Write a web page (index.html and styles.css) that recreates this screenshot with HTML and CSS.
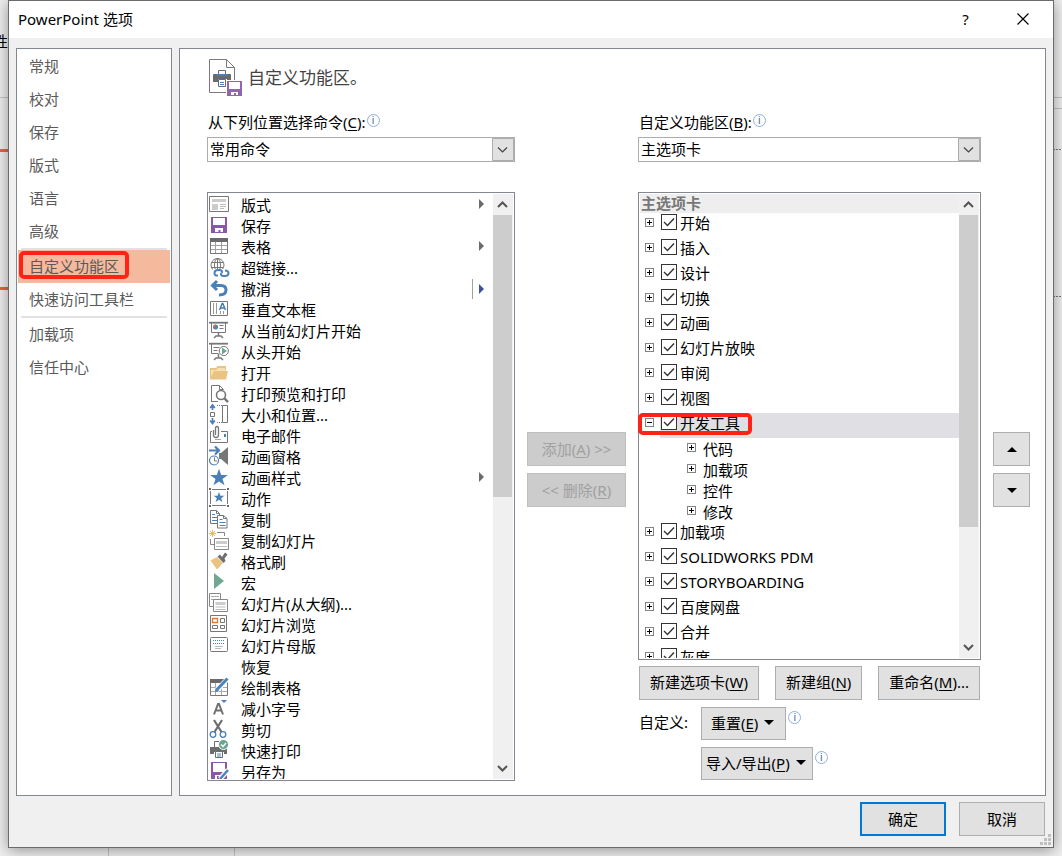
FILE: index.html
```html
<!DOCTYPE html>
<html lang="zh-CN">
<head>
    <meta charset="UTF-8">
    <title>PowerPoint 选项</title>
    <link rel="stylesheet" href="styles.css">
</head>
<body>
    <!-- Application behind the dialog -->
    <div class="backdrop">
        <span class="backdrop-text">性</span>
        <span class="line line-ribbon"></span>
        <span class="line line-right"></span>
        <span class="line line-orange-1"></span>
        <span class="line line-orange-2"></span>
        <span class="line line-dash-1"></span>
        <span class="line line-dash-2"></span>
        <span class="line line-status-1"></span>
        <span class="line line-status-2"></span>
    </div>

    <div class="dialog" role="dialog" aria-labelledby="dialog-title">
        <header class="title-bar">
            <h1 id="dialog-title">PowerPoint 选项</h1>
            <button class="title-button" aria-label="帮助">?</button>
            <button class="title-button" aria-label="关闭">
                <svg width="12" height="12" viewBox="0 0 12 12" fill="none" stroke="#000" stroke-width="1.2"><path d="M.5.5l11 11M11.5.5l-11 11"/></svg>
            </button>
        </header>

        <div class="dialog-body">
            <!-- Categories -->
            <nav class="nav">
                <a href="#general">常规</a>
                <a href="#proofing">校对</a>
                <a href="#save">保存</a>
                <a href="#layout">版式</a>
                <a href="#language">语言</a>
                <a href="#advanced">高级</a>
                <hr>
                <a href="#ribbon" class="active">自定义功能区<span class="mark"></span></a>
                <a href="#toolbar">快速访问工具栏</a>
                <hr>
                <a href="#addins">加载项</a>
                <a href="#trust">信任中心</a>
            </nav>

            <main class="panel">
                <div class="panel-header">
                    <svg width="34" height="38" viewBox="0 0 34 38">
                        <path d="M.5.5h17l8 8v25h-25z" fill="#fff" stroke="#7a7a7a"/>
                        <path d="M17.500.5v8h8" fill="none" stroke="#7a7a7a"/>
                        <path d="M5 15h16q1 0 1 1v7h-4v-3h-9v3H4v-7q0-1 1-1z" fill="#6a6a6a"/>
                        <path d="M9.500 16v-4.500h7V16" fill="#fff" stroke="#6a6a6a"/>
                        <path d="M8 16h10" stroke="#4a7ebb" stroke-width="2"/>
                        <path d="M9.500 20.500h7v7h-7z" fill="#fff" stroke="#6a6a6a"/>
                        <path d="M11 23.500h4M11 25.500h4" stroke="#4a7ebb"/>
                        <path d="M17 21h17v17H17z" fill="#fff"/>
                        <path d="M18 22h15v15H18z" fill="#9264b4"/>
                        <path d="M20 23h11v7H20zM22 33h7v3h-2v-2h-2v2h-3z" fill="#fff"/>
                    </svg>
                    <h2>自定义功能区。</h2>
                </div>

                <div class="columns">
                    <!-- Available commands -->
                    <section class="column">
                        <div class="field-label">
                            <label for="source">从下列位置选择命令(<u>C</u>):</label>
                            <span class="info">i</span>
                        </div>
                        <select id="source"><option>常用命令</option></select>

                        <div class="listbox">
                            <ul class="commands">
                                <li><svg class="icon" viewBox="0 0 20 20"><path d="M.5 1.500h19v15H.5z" fill="#fff" stroke="#777"/><path d="M3 4h14v3H3zM3 9h6v6H3z" fill="#ccc"/><path d="M11 9.500h6M11 11.500h6M11 13.500h4" stroke="#bbb"/></svg>版式<i class="more"></i></li>
                                <li><svg class="icon" viewBox="0 0 20 20"><path d="M2 1h16v16H2z" fill="#8a57a9"/><path d="M4 2h12v7H4zM6 12h8v4h-2.500v-2h-2v2H6z" fill="#fff"/></svg>保存</li>
                                <li><svg class="icon" viewBox="0 0 20 20"><path d="M1.500 1.500h17v15h-17z" fill="#fff" stroke="#777"/><path d="M1 1h18v4H1z" fill="#6a6a6a"/><path d="M2 8.500h16M2 12.500h16M6.500 5v11M12.500 5v11" stroke="#a0a0a0"/></svg>表格<i class="more"></i></li>
                                <li><svg class="icon" viewBox="0 0 20 20" fill="none"><circle cx="8.500" cy="7" r="6.500" stroke="#777"/><ellipse cx="8.500" cy="7" rx="3" ry="6.500" stroke="#777"/><path d="M2.500 4.500h12M2 9.500h12M8.500.5v13" stroke="#777"/><path d="M4 11h16v9H4z" fill="#fff"/><path d="M9 17.500q-3.500.5-3.500-2.500t3.500-3h1.500q3 0 2.500 3M16 12.500q3.500 0 3.500 2.800 0 2.700-3.500 2.700h-1.500q-3 0-2.500-3" stroke="#4a84c0" stroke-width="2"/></svg>超链接...</li>
                                <li><svg class="icon" viewBox="0 0 20 20" fill="none" stroke="#4a7fb8" stroke-width="3"><path d="M8 2L3.500 6.500 8 11M4 6.500h8q5 0 5 4.500 0 5-7 5"/></svg>撤消<i class="split"></i></li>
                                <li><svg class="icon" viewBox="0 0 20 20" fill="none"><path d="M1.500 1.500h17v14h-17z" fill="#fff" stroke="#777"/><path d="M4.500 3v11M7.500 3v11M11.500 11v3M14.500 11v3" stroke="#999"/><path d="M10.500 10l2.700-6.500h.6L16.500 10M11.500 8h4" stroke="#3f78b8" stroke-width="1.400"/></svg>垂直文本框</li>
                                <li><svg class="icon" viewBox="0 0 20 20" fill="none" stroke="#777"><path d="M0 1.700h19" stroke-width="1.800"/><path d="M2.500 2v9.500h14V2"/><path d="M9.500 12v3M5 17l2-2h5l2 2" stroke-width="1.500"/><circle cx="6.500" cy="6" r="2.500" fill="#4a7fb8" stroke="none"/><path d="M6.500 3.500a2.500 2.500 0 0 0-2.400 3.100l2.400-.6z" fill="#e0703a" stroke="none"/><path d="M10.500 4.500h4M10.500 7.500h4"/></svg>从当前幻灯片开始</li>
                                <li><svg class="icon" viewBox="0 0 20 20" fill="none" stroke="#777"><path d="M0 1.700h19" stroke-width="1.800"/><path d="M2.500 2v9.500h7"/><path d="M4.500 5.500h6M4.500 8.500h4"/><path d="M9.500 12v4M5 18l2-2h5l2 2" stroke-width="1.500"/><circle cx="14.800" cy="9" r="4.600" fill="#fff"/><path d="M13 5.500l5 3.500-5 3.500z" fill="#6aa58e" stroke="none"/></svg>从头开始</li>
                                <li><svg class="icon" viewBox="0 0 20 20"><path d="M1 16V5h6l2-2h8v5" fill="#f6dfb4"/><path d="M1 16V5h6l2-2h8v4h-1V5H9L7 7H2v7z" fill="#eac282"/><path d="M1 16.500L5 8h14l-2 8.500z" fill="#eac282"/></svg>打开</li>
                                <li><svg class="icon" viewBox="0 0 20 20" fill="none" stroke="#777"><path d="M2.500 18V1.500h8l4 4M10.500 1.500v4h4M2 17.500h7"/><circle cx="12" cy="11" r="4.500" fill="#fff" stroke-width="1.600"/><path d="M15.200 14.200l3.800 4" stroke-width="2.400"/></svg>打印预览和打印</li>
                                <li><svg class="icon" viewBox="0 0 20 20" fill="none"><path d="M3.500 0v5M3.500 13v5M1.200 3l2.300-3 2.300 3M1.200 15.500l2.300 3 2.300-3" stroke="#4a7fb8" stroke-width="1.700"/><path d="M1.500 7.500h4v4h-4z" stroke="#777"/><path d="M8 .5h6M8 17.500h6" stroke="#777" stroke-dasharray="1 1"/><path d="M13.500.5h5v17h-5z" stroke="#777"/></svg>大小和位置...</li>
                                <li><svg class="icon" viewBox="0 0 20 20" fill="none" stroke="#777"><path d="M3 5.500H1.500v11h17v-11H12"/><path d="M4.500 4v5q0 2.500 2.500 2.500T9.500 9V2.500Q9.500.5 8 .5T6.500 2.500V9" stroke-width="1.300"/><path d="M6 13.500h6" stroke="#aaa"/><path d="M15 8h2v3h-2z" fill="#4a7fb8" stroke="none"/></svg>电子邮件</li>
                                <li><svg class="icon" viewBox="0 0 20 20" fill="none"><path d="M0 3.500h9M6-.5l4 4-4 4" stroke="#4a7fb8" stroke-width="2.200"/><path d="M19 0v18l-7-6h-2V6h2z" fill="#777"/><circle cx="5" cy="13.500" r="5.500" fill="#fff"/><circle cx="5" cy="13.500" r="4.500" stroke="#4a7fb8" stroke-width="1.200"/><path d="M5.500 10.500v3.500h2.500" stroke="#777"/></svg>动画窗格</li>
                                <li><svg class="icon" viewBox="0 0 20 20"><path d="M10 .8l2.200 6.100h6.600l-5.300 4 2 6.400L10 13.500l-5.500 3.800 2-6.400-5.300-4h6.600z" fill="#4a7fb8"/></svg>动画样式<i class="more"></i></li>
                                <li><svg class="icon" viewBox="0 0 20 20"><path d="M3 .5h14M3 16.500h14M1.500 2v13M18.500 2v13" fill="none" stroke="#777"/><path d="M0-1h2v2H0zM18-1h2v2h-2zM0 16h2v2H0zM18 16h2v2h-2z" fill="#666"/><path d="M10 3l1.400 3.700h3.900l-3.100 2.500 1.200 3.900-3.400-2.300-3.400 2.300 1.200-3.900-3.100-2.500h3.900z" fill="#4a7fb8"/></svg>动作</li>
                                <li><svg class="icon" viewBox="0 0 20 20" stroke="#777" fill="#fff"><path d="M1.500.5h6l3 3v10h-9z"/><path d="M7.500.5v3h3" fill="none"/><path d="M3 4.500h3M3 7.500h5M3 10.500h5" stroke="#4a7fb8"/><path d="M8.500 5.500h6l3.500 3v9.500H8.500z"/><path d="M14.500 5.500v3h3.500" fill="none"/><path d="M10.500 9.500h3M10.500 12.500h6M10.500 15.500h6" stroke="#4a7fb8"/></svg>复制</li>
                                <li><svg class="icon" viewBox="0 0 20 20" fill="none" stroke="#888"><path d="M3.500-1v7M0 2.500h7M1 0l5 5M6 0L1 5" stroke="#eab860"/><path d="M8 1.500h7.500V5M1.500 8v5.500H5"/><path d="M5.500 7.500h14v11h-14z" fill="#fff"/><path d="M7 10h11v3H7z" fill="#ccc" stroke="none"/><path d="M7 15.500h11" stroke="#bbb"/></svg>复制幻灯片</li>
                                <li><svg class="icon" viewBox="0 0 20 20"><path d="M1.500 8.500L8 5l6 6-6 6.500z" fill="#eac282"/><path d="M8.500 4.500l2.500-2 2 2.500 3-4.500 2.500 2-3 4 1 2.500-2 2z" fill="#6d6d6d"/></svg>格式刷</li>
                                <li><svg class="icon" viewBox="0 0 20 20"><path d="M5 0l10 8-10 8z" fill="#6fa792"/></svg>宏</li>
                                <li><svg class="icon" viewBox="0 0 20 20" fill="none" stroke="#888"><path d="M4 12.500H.5v-13h11V5"/><path d="M2 2.500h8M2 5.500h3" stroke="#aaa"/><path d="M4.500 5.500h14v12h-14z" fill="#fff"/><path d="M6.500 8h10v3h-10z" fill="#ccc" stroke="none"/><path d="M6.500 13h10M6.500 15.500h10" stroke="#bbb"/></svg>幻灯片(从大纲)...</li>
                                <li><svg class="icon" viewBox="0 0 20 20" fill="none" stroke="#777"><path d="M1.500.5h16v16h-16z"/><path d="M3.500 3.500h5v4h-5z" stroke="#e07b30" stroke-width="1.300"/><path d="M11.500 3.500h4v4h-4zM3.500 10.500h5v3h-5zM11.500 10.500h4v3h-4z"/></svg>幻灯片浏览</li>
                                <li><svg class="icon" viewBox="0 0 20 20" fill="none" stroke="#777"><rect x="1.500" y="1.500" width="17" height="14" rx="1"/><path d="M4 4.500h12M4 7.500h12" stroke="#4a7fb8" stroke-dasharray="1 1"/><path d="M6 10.500h8M6 12.500h6" stroke="#bbb"/></svg>幻灯片母版</li>
                                <li><span class="icon"></span>恢复</li>
                                <li><svg class="icon" viewBox="0 0 20 20" fill="none"><path d="M1.500 1.500h17v16h-17z" fill="#fff" stroke="#777"/><path d="M1 1h14v4H1z" fill="#6a6a6a"/><path d="M2 9.500h16M2 13.500h16M6.500 5v12M12.500 5v12" stroke="#aaa"/><path d="M8 12l10.500-11" stroke="#fff" stroke-width="5"/><path d="M8 11.500L18.500.5" stroke="#4a84c0" stroke-width="3"/><path d="M6 14l1-4 3 3z" fill="#4a84c0"/></svg>绘制表格</li>
                                <li><svg class="icon" viewBox="0 0 20 20" fill="none"><path d="M5 15.500L9 5h1l4 10.500M6.500 11.500h6" stroke="#707070" stroke-width="2"/><path d="M12 1h6l-3 3z" fill="#4a7fb8"/></svg>减小字号</li>
                                <li><svg class="icon" viewBox="0 0 20 20" fill="none"><path d="M5 0l7.500 12M13 0L5.500 12" stroke="#6d6d6d" stroke-width="2.200"/><circle cx="4" cy="14.500" r="2.800" stroke="#4a7fb8" stroke-width="1.300"/><circle cx="14" cy="14.500" r="2.800" stroke="#4a7fb8" stroke-width="1.300"/></svg>剪切</li>
                                <li><svg class="icon" viewBox="0 0 20 20" fill="none"><path d="M1 6h17v7h-3v-2H5v2H1z" fill="#6d6d6d"/><path d="M5.500 6V.5h6" stroke="#6d6d6d"/><path d="M6.500 10.500h7v6h-7z" fill="#fff" stroke="#6d6d6d"/><path d="M8 13h4M8 15h4" stroke="#4a7fb8"/><circle cx="14.500" cy="3.500" r="5" fill="#6aa58e" stroke="#fff"/><path d="M12 3.500l2 2 3-3.500" stroke="#fff" stroke-width="1.400"/></svg>快速打印</li>
                                <li><svg class="icon" viewBox="0 0 20 20" fill="none"><path d="M2 0h16v17H2z" fill="#8a57a9"/><path d="M4 1h12v9H4zM6 13h8v4H6z" fill="#fff"/><path d="M8 14h2v3H8z" fill="#8a57a9"/><path d="M11 17l8-9" stroke="#fff" stroke-width="5"/><path d="M11 17l8-9" stroke="#4a84c0" stroke-width="2.500"/></svg>另存为</li>
                            </ul>
                            <div class="scrollbar">
                                <button class="scroll-button" aria-label="向上"><svg width="11" height="7" viewBox="0 0 11 7"><path d="M1 6l4.500-4.500L10 6"/></svg></button>
                                <div class="track"><div class="thumb thumb-commands"></div></div>
                                <button class="scroll-button" aria-label="向下"><svg width="11" height="7" viewBox="0 0 11 7"><path d="M1 1l4.500 4.500L10 1"/></svg></button>
                            </div>
                        </div>
                    </section>

                    <div class="side-buttons">
                        <button class="button" disabled>添加(<u>A</u>) &gt;&gt;</button>
                        <button class="button" disabled>&lt;&lt; 删除(<u>R</u>)</button>
                    </div>

                    <!-- Ribbon tabs -->
                    <section class="column">
                        <div class="field-label">
                            <label for="target">自定义功能区(<u>B</u>):</label>
                            <span class="info">i</span>
                        </div>
                        <select id="target"><option>主选项卡</option></select>

                        <div class="listbox">
                            <div class="tree">
                                <div class="tree-header">主选项卡</div>
                                <ul>
                                    <li class="tab"><button class="expander" aria-label="展开"></button><label><input type="checkbox" checked>开始</label></li>
                                    <li class="tab"><button class="expander" aria-label="展开"></button><label><input type="checkbox" checked>插入</label></li>
                                    <li class="tab"><button class="expander" aria-label="展开"></button><label><input type="checkbox" checked>设计</label></li>
                                    <li class="tab"><button class="expander" aria-label="展开"></button><label><input type="checkbox" checked>切换</label></li>
                                    <li class="tab"><button class="expander" aria-label="展开"></button><label><input type="checkbox" checked>动画</label></li>
                                    <li class="tab"><button class="expander" aria-label="展开"></button><label><input type="checkbox" checked>幻灯片放映</label></li>
                                    <li class="tab"><button class="expander" aria-label="展开"></button><label><input type="checkbox" checked>审阅</label></li>
                                    <li class="tab"><button class="expander" aria-label="展开"></button><label><input type="checkbox" checked>视图</label></li>
                                    <li class="tab selected"><button class="expander open" aria-label="折叠"></button><label><input type="checkbox" checked>开发工具</label><span class="mark"></span></li>
                                    <li class="group"><button class="expander" aria-label="展开"></button>代码</li>
                                    <li class="group"><button class="expander" aria-label="展开"></button>加载项</li>
                                    <li class="group"><button class="expander" aria-label="展开"></button>控件</li>
                                    <li class="group"><button class="expander" aria-label="展开"></button>修改</li>
                                    <li class="tab"><button class="expander" aria-label="展开"></button><label><input type="checkbox" checked>加载项</label></li>
                                    <li class="tab"><button class="expander" aria-label="展开"></button><label><input type="checkbox" checked>SOLIDWORKS PDM</label></li>
                                    <li class="tab"><button class="expander" aria-label="展开"></button><label><input type="checkbox" checked>STORYBOARDING</label></li>
                                    <li class="tab"><button class="expander" aria-label="展开"></button><label><input type="checkbox" checked>百度网盘</label></li>
                                    <li class="tab"><button class="expander" aria-label="展开"></button><label><input type="checkbox" checked>合并</label></li>
                                    <li class="tab"><button class="expander" aria-label="展开"></button><label><input type="checkbox" checked>灰度</label></li>
                                </ul>
                            </div>
                            <div class="scrollbar">
                                <button class="scroll-button" aria-label="向上"><svg width="11" height="7" viewBox="0 0 11 7"><path d="M1 6l4.500-4.500L10 6"/></svg></button>
                                <div class="track"><div class="thumb thumb-tabs"></div></div>
                                <button class="scroll-button" aria-label="向下"><svg width="11" height="7" viewBox="0 0 11 7"><path d="M1 1l4.500 4.500L10 1"/></svg></button>
                            </div>
                        </div>

                        <div class="tab-actions">
                            <button class="button">新建选项卡(<u>W</u>)</button>
                            <button class="button">新建组(<u>N</u>)</button>
                            <button class="button">重命名(<u>M</u>)...</button>
                        </div>
                        <div class="customize">
                            <span>自定义:</span>
                            <div class="menu-row"><button class="button menu">重置(<u>E</u>)</button><span class="info">i</span></div>
                            <div class="menu-row"><button class="button menu menu-wide">导入/导出(<u>P</u>)</button><span class="info">i</span></div>
                        </div>
                    </section>

                    <div class="side-buttons">
                        <button class="button" aria-label="上移"><i class="arrow-up"></i></button>
                        <button class="button" aria-label="下移"><i class="arrow-down"></i></button>
                    </div>
                </div>
            </main>
        </div>

        <footer class="dialog-footer">
            <button class="button primary">确定</button>
            <button class="button">取消</button>
        </footer>
        <svg class="grip" width="12" height="12" viewBox="0 0 12 12" fill="#bfbfbf"><path d="M8 0h3v3H8zM4 4h3v3H4zM8 4h3v3H8zM0 8h3v3H0zM4 8h3v3H4zM8 8h3v3H8z"/></svg>
    </div>
</body>
</html>
```
FILE: styles.css
```css
* {
    box-sizing: border-box;
}

body {
    margin: 0;
    padding: 0 8px 8px;
    background: #efefef;
    color: #000;
    font: 15px/20px "Noto Sans", "Noto Sans CJK SC", sans-serif;
    overflow: hidden;
}

h1, h2, ul {
    margin: 0;
    padding: 0;
    font-weight: normal;
}

ul {
    list-style: none;
}

button, select, input {
    margin: 0;
    padding: 0;
    font: inherit;
    color: inherit;
}

u {
    text-underline-offset: 2px;
}

/* Backdrop */
.backdrop {
    position: absolute;
    inset: 0;
    overflow: hidden;
}

.backdrop-text {
    position: absolute;
    left: -7px;
    top: 31px;
}

.line {
    position: absolute;
    height: 1px;
    background: #c4c4c4;
}

.line-ribbon { left: 0; right: 0; top: 97px; }
.line-right { left: 50%; right: 0; top: 108px; }

.line-orange-1, .line-orange-2 {
    left: 0;
    width: 9px;
    height: 3px;
    background: #e0694a;
}

.line-orange-1 { top: 149px; }
.line-orange-2 { top: 287px; }

.line-dash-1, .line-dash-2 {
    left: 50%;
    right: 0;
    background: repeating-linear-gradient(90deg, #777 0 2px, transparent 2px 3px);
}

.line-dash-1 { top: 149px; }
.line-dash-2 { top: 296px; }

.line-status-1, .line-status-2 {
    bottom: 0;
    width: 1px;
    height: 10px;
}

.line-status-1 { left: 108px; }
.line-status-2 { left: 234px; }

/* Dialog */
.dialog {
    position: relative;
    display: flex;
    flex-direction: column;
    height: calc(100vh - 8px);
    border: 1px solid #6b6b6b;
    background: #f0f0f0;
    box-shadow: 0 2px 14px rgba(0, 0, 0, 0.4);
}

.title-bar {
    display: flex;
    align-items: center;
    height: 37px;
    padding: 0 2px 2px 9px;
    background: #fff;
}

.title-bar h1 {
    flex: 1;
    font-size: 15px;
}

.title-button {
    width: 57px;
    height: 34px;
    border: none;
    background: none;
}

.dialog-body {
    display: flex;
    flex: 1;
    gap: 7px;
    min-height: 0;
    padding: 10px 7px 0;
}

/* Categories */
.nav {
    width: 156px;
    padding: 1px;
    border: 1px solid #828790;
    background: #fff;
}

.nav a {
    position: relative;
    display: block;
    padding-left: 11px;
    line-height: 33px;
    color: #5a5a5a;
    text-decoration: none;
}

.nav a.active {
    background: #f5b99d;
}

.nav hr {
    height: 2px;
    margin: 0 3px;
    border: none;
    background: #e2e2e2;
}

.mark {
    position: absolute;
    border: 4px solid #ff2216;
    border-radius: 5px;
}

.nav .mark {
    left: 1px;
    top: 1px;
    width: 110px;
    height: 28px;
}

/* Panel */
.panel {
    display: flex;
    flex: 1;
    flex-direction: column;
    min-width: 0;
    padding: 10px 15px 14px 27px;
    border: 1px solid #828790;
    background: #fff;
}

.panel-header {
    display: flex;
    align-items: center;
    gap: 5px;
    padding-left: 2px;
    margin-bottom: 15px;
    color: #444;
}

.panel-header h2 {
    font-size: 17px;
}

.columns {
    display: grid;
    grid-template-columns: minmax(0, 308fr) 99px minmax(0, 343fr) 37px;
    grid-template-rows: minmax(0, 1fr);
    gap: 12px;
    flex: 1;
    min-height: 0;
}

.column {
    display: flex;
    flex-direction: column;
    min-height: 0;
}

.field-label {
    display: flex;
    gap: 1px;
    padding-left: 1px;
    margin-bottom: 5px;
}

.info {
    width: 13px;
    height: 13px;
    margin-top: 2px;
    border: 1px solid #8fb0dc;
    border-radius: 50%;
    color: #44618f;
    font-size: 10px;
    line-height: 11px;
    text-align: center;
}

select {
    height: 25px;
    padding: 0 0 2px 2px;
    border: 1px solid #acacac;
    border-radius: 0;
    appearance: none;
    background:
        url("data:image/svg+xml,%3Csvg xmlns='http://www.w3.org/2000/svg' width='22' height='23'%3E%3Cpath d='M.5.5h21v22H.5z' fill='%23e1e1e1' stroke='%23acacac'/%3E%3Cpath d='M6 9.500l4.500 4.500L15 9.500' fill='none' stroke='%23444' stroke-width='1.200'/%3E%3C/svg%3E") right center no-repeat #fff;
}

.listbox {
    display: flex;
    flex: 1;
    min-height: 0;
    margin-top: 30px;
    padding: 1px;
    border: 1px solid #828790;
}

.commands, .tree {
    flex: 1;
    min-width: 0;
    overflow: hidden;
}

.commands {
    padding-top: 1px;
}

.commands li {
    display: flex;
    height: 21px;
    padding-right: 9px;
}

.icon {
    flex: none;
    width: 20px;
    height: 20px;
    margin-right: 12px;
    overflow: visible;
}

.more {
    height: 10px;
    margin: 4px 0 0 auto;
    border: 5px solid transparent;
    border-right: none;
    border-left-color: #6b6b6b;
}

.split {
    height: 20px;
    margin-left: auto;
    padding: 5px 0 5px 6px;
    border-left: 1px solid #a0a0a0;
}

.split::before {
    content: "";
    display: block;
    border: 5px solid transparent;
    border-right: none;
    border-left-color: #3c539c;
}

/* Scrollbar */
.scrollbar {
    display: flex;
    flex-direction: column;
    width: 20px;
    background: #f0f0f0;
}

.scroll-button {
    height: 21px;
    padding-right: 2px;
    border: none;
    background: none;
    line-height: 0;
}

.scroll-button path {
    fill: none;
    stroke: #555;
    stroke-width: 2;
}

.track {
    flex: 1;
}

.thumb {
    width: 19px;
    background: #cdcdcd;
}

.thumb-commands { height: 52%; }
.thumb-tabs { height: 74%; }

/* Tree */
.tree {
    margin-left: -2px;
    padding-left: 2px;
}

.tree-header {
    height: 19px;
    padding-left: 1px;
    background: #eee;
    color: #777;
    font-weight: bold;
    line-height: 19px;
}

.tab, .group {
    display: flex;
    align-items: flex-start;
    line-height: 21px;
}

.tab {
    position: relative;
    height: 25px;
    padding-left: 5px;
}

.group {
    height: 21px;
    padding-left: 47px;
    line-height: 23px;
}

.group .expander {
    margin-right: 7px;
}

.tab label {
    display: flex;
    flex: 1;
    gap: 3px;
    padding-left: 1px;
}

.selected label {
    background: #e0dfe4;
    height: 25px;
}

.expander {
    flex: none;
    width: 9px;
    height: 9px;
    margin: 5px 6px 0 0;
    border: 1px solid #848484;
    background:
        linear-gradient(#000, #000) center / 5px 1px no-repeat,
        linear-gradient(#000, #000) center / 1px 5px no-repeat,
        #fff;
}

.expander.open {
    background: linear-gradient(#000, #000) center / 5px 1px no-repeat, #fff;
}

input[type="checkbox"] {
    width: 16px;
    height: 16px;
    margin-top: 1px;
    border: 1px solid #333;
    appearance: none;
    background: #fff;
}

input[type="checkbox"]:checked {
    background: url("data:image/svg+xml,%3Csvg xmlns='http://www.w3.org/2000/svg' width='14' height='14'%3E%3Cpath d='M2 7l3.500 3.500L12 3.500' fill='none' stroke='%23333' stroke-width='1.400'/%3E%3C/svg%3E") #fff;
}

.tab .mark {
    left: -2px;
    top: 0;
    width: 114px;
    height: 22px;
}

/* Buttons */
.button {
    height: 34px;
    padding: 0 10px 2px;
    border: 1px solid #adadad;
    background: #e1e1e1;
    white-space: nowrap;
}

.button:disabled {
    padding: 0;
    border-color: #bfbfbf;
    background: #ccc;
    color: #a0a0a0;
}

.side-buttons {
    display: flex;
    flex-direction: column;
    gap: 7px;
    padding-top: 320px;
}

.side-buttons .button {
    flex: none;
}

.tab-actions {
    display: flex;
    justify-content: space-between;
    padding: 6px 1px 7px;
}

.customize {
    display: grid;
    grid-template-columns: 62px 1fr;
    row-gap: 7px;
    padding: 0 0 1px 1px;
}

.customize > span {
    line-height: 30px;
}

.menu-row {
    display: flex;
    grid-column: 2;
    gap: 2px;
}

.menu {
    height: 33px;
    padding: 0 9px 2px;
}

.menu-wide {
    padding: 0 4px 2px;
}

.menu::after {
    content: "";
    display: inline-block;
    margin: 0 2px 4px 6px;
    border: 5px solid transparent;
    border-bottom: none;
    border-top-color: #000;
}

.menu-row .info {
    margin-top: 4px;
}

.arrow-up, .arrow-down {
    display: inline-block;
    margin-bottom: 2px;
    border: 5px solid transparent;
}

.arrow-up {
    border-top: none;
    border-bottom-color: #000;
}

.arrow-down {
    border-bottom: none;
    border-top-color: #000;
}

.dialog-footer {
    display: flex;
    justify-content: flex-end;
    gap: 13px;
    padding: 6px 8px 11px;
}

.dialog-footer .button {
    width: 86px;
    padding: 0;
}

.dialog-footer .primary {
    border: 2px solid #0078d7;
}

.grip {
    position: absolute;
    right: 1px;
    bottom: 1px;
}
```
